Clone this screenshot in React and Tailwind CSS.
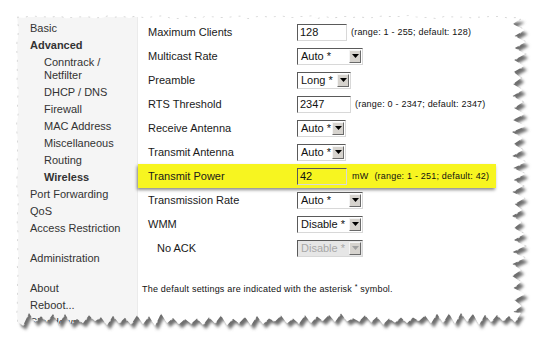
import React from 'react';

function rng(seed) {
  let s = seed;
  return () => {
    s = (s * 9301 + 49297) % 233280;
    return s / 233280;
  };
}

function buildPaper() {
  const r = rng(7);
  const pts = [];
  for (let x = 17; x < 508; x += 7) pts.push([x, 16 + r() * 3]);
  let t = 0;
  for (let y = 18; y < 314; y += 6) {
    const out = t % 2 === 0;
    pts.push([out ? 521 + r() * 5 : 512 + r() * 3, y]);
    t++;
  }
  t = 0;
  for (let x = 521; x > 17; x -= 6) {
    const up = t % 2 === 0;
    const y = up ? 313 + r() * 6 : 321 + r() * 5;
    pts.push([x, y]);
    t++;
  }
  for (let y = 322; y > 18; y -= 8) pts.push([17 + r() * 2, y]);
  return 'M' + pts.map((p) => p[0].toFixed(1) + ' ' + p[1].toFixed(1)).join(' L') + ' Z';
}

const PAPER = buildPaper();

function Arrow({ disabled }) {
  return (
    <div className="ml-auto mr-[1px] flex h-[13px] w-[12px] items-center justify-center border border-t-[#f4f4f4] border-l-[#f4f4f4] border-r-[#6a6a6a] border-b-[#6a6a6a] bg-[#d6d3ce]">
      <svg width="7" height="4" viewBox="0 0 7 4">
        <path d="M0 0 L7 0 L3.5 4 Z" fill={disabled ? '#a0a0a0' : '#000'} />
      </svg>
    </div>
  );
}

function Select({ value, w, disabled }) {
  return (
    <div
      className={`flex h-[17px] items-center border border-t-[#5a5a5a] border-l-[#5a5a5a] border-r-[#d8d8d8] border-b-[#d8d8d8] ${w} ${
        disabled ? 'bg-[#e6e6e6] text-[#a8a8a8]' : 'bg-white text-[#111]'
      }`}
    >
      <span className="pl-[3px] text-[11px] leading-none">{value}</span>
      <Arrow disabled={disabled} />
    </div>
  );
}

function Input({ value, w, yellow }) {
  return (
    <div
      className={`flex h-[17px] items-center border border-t-[#5a5a5a] border-l-[#5a5a5a] border-r-[#d8d8d8] border-b-[#d8d8d8] ${w} ${
        yellow ? 'bg-[#f7f520]' : 'bg-white'
      }`}
    >
      <span className="pl-[2px] text-[11px] leading-none text-[#111]">{value}</span>
    </div>
  );
}

function Small({ children, className = '' }) {
  return (
    <span className={`text-[9px] leading-none tracking-[0.2px] text-[#111] ${className}`}>{children}</span>
  );
}

function Row({ label, children, yellow, indent }) {
  return (
    <div
      className={`flex h-[24px] w-[358px] items-center pl-[10px] ${
        yellow ? 'bg-[#f7f520] shadow-[-1px_2px_3px_rgba(0,0,0,0.45)]' : ''
      }`}
    >
      <div className={`w-[149px] text-[11px] text-[#1a1a1a] ${indent ? 'pl-[9px]' : ''}`}>{label}</div>
      <div className="flex items-center">{children}</div>
    </div>
  );
}

function NavItem({ children, sub, bold }) {
  return (
    <div
      className={`py-[2px] text-[11px] leading-[13px] text-[#333] ${sub ? 'pl-[14px]' : ''} ${
        bold ? 'font-bold text-[#222]' : ''
      }`}
    >
      {children}
    </div>
  );
}

export default function App() {
  return (
    <div
      className="relative h-[343px] w-[540px] overflow-hidden bg-white"
      style={{ fontFamily: '"Liberation Sans", Arial, sans-serif' }}
    >
      <div className="flex h-full pl-[17px] pt-[17px]">
        <div className="w-[121px] shrink-0 border-r border-[#ebebeb] bg-[#f5f5f5] pl-[13px] pt-[3px]">
          <NavItem>Basic</NavItem>
          <NavItem bold>Advanced</NavItem>
          <NavItem sub>
            Conntrack /<br />
            Netfilter
          </NavItem>
          <NavItem sub>DHCP / DNS</NavItem>
          <NavItem sub>Firewall</NavItem>
          <NavItem sub>MAC Address</NavItem>
          <NavItem sub>Miscellaneous</NavItem>
          <NavItem sub>Routing</NavItem>
          <NavItem sub bold>
            Wireless
          </NavItem>
          <NavItem>Port Forwarding</NavItem>
          <NavItem>QoS</NavItem>
          <NavItem>Access Restriction</NavItem>
          <div className="h-[13px]" />
          <NavItem>Administration</NavItem>
          <div className="h-[13px]" />
          <NavItem>About</NavItem>
          <NavItem>Reboot...</NavItem>
          <NavItem>Shutdown...</NavItem>
        </div>
        <div className="flex-1 bg-white pt-[3px]">
          <Row label="Maximum Clients">
            <Input value="128" w="w-[50px]" />
            <Small className="ml-[4px]">(range: 1 - 255; default: 128)</Small>
          </Row>
          <Row label="Multicast Rate">
            <Select value="Auto *" w="w-[66px]" />
          </Row>
          <Row label="Preamble">
            <Select value="Long *" w="w-[54px]" />
          </Row>
          <Row label="RTS Threshold">
            <Input value="2347" w="w-[54px]" />
            <Small className="ml-[4px]">(range: 0 - 2347; default: 2347)</Small>
          </Row>
          <Row label="Receive Antenna">
            <Select value="Auto *" w="w-[49px]" />
          </Row>
          <Row label="Transmit Antenna">
            <Select value="Auto *" w="w-[49px]" />
          </Row>
          <Row label="Transmit Power" yellow>
            <Input value="42" w="w-[50px]" yellow />
            <Small className="ml-[5px]">mW</Small>
            <Small className="ml-[6px]">(range: 1 - 251; default: 42)</Small>
          </Row>
          <Row label="Transmission Rate">
            <Select value="Auto *" w="w-[66px]" />
          </Row>
          <Row label="WMM">
            <Select value="Disable *" w="w-[66px]" />
          </Row>
          <Row label="No ACK" indent>
            <Select value="Disable *" w="w-[66px]" disabled />
          </Row>
          <div className="mt-[19px] pl-[4px] leading-none">
            <Small>
              The default settings are indicated with the asterisk{' '}
              <sup className="text-[7px]">*</sup> symbol.
            </Small>
          </div>
        </div>
      </div>
      <svg className="pointer-events-none absolute left-0 top-0" width="540" height="343">
        <defs>
          <filter id="blur" x="-10%" y="-10%" width="120%" height="120%">
            <feGaussianBlur stdDeviation="1.6" />
          </filter>
          <mask id="outside">
            <rect width="540" height="343" fill="white" />
            <path d={PAPER} fill="black" />
          </mask>
        </defs>
        <g mask="url(#outside)">
          <rect width="540" height="343" fill="white" />
          <path d={PAPER} transform="translate(3,4)" fill="#6e6e6e" filter="url(#blur)" />
          <path d={PAPER} fill="none" stroke="#cfcfcf" strokeWidth="1.5" strokeDasharray="2 7" />
        </g>
      </svg>
    </div>
  );
}
